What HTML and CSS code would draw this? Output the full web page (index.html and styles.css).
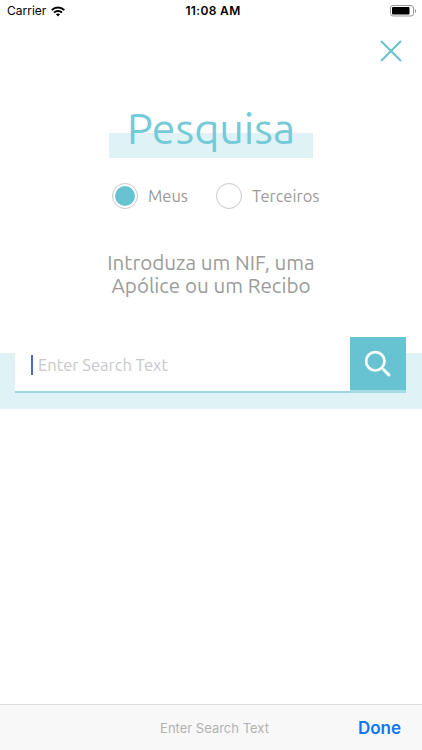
FILE: index.html
```html
<!DOCTYPE html>
<html lang="pt">

<head>
    <meta charset="UTF-8" />
    <meta name="viewport" content="width=device-width, initial-scale=1.0" />
    <title>Pesquisa</title>
    <link rel="stylesheet" href="styles.css">
</head>

<body>
    <header class="status">
        <div class="carrier">
            <span>Carrier</span>
            <svg width="14" height="11" viewBox="0 0 14 11" fill="none" stroke="#000" stroke-width="2">
                <path d="M0.7 4.1C4.2 0.6 9.8 0.6 13.3 4.1" />
                <path d="M3 6.6C5.2 4.5 8.8 4.5 11 6.6" />
                <path d="M4.9 8.2C6.1 7.2 7.9 7.2 9.1 8.2L7 10.4Z" fill="#000" stroke="none" />
            </svg>
        </div>
        <span class="time">11:08 AM</span>
        <svg class="battery" width="27" height="12" viewBox="0 0 27 12">
            <rect x="0.5" y="0.5" width="23" height="10.5" rx="2.5" fill="#fff" stroke="#999" />
            <rect x="2" y="2" width="17.5" height="7.5" rx="1" fill="#000" />
            <path d="M25 4v4c1.6-.6 1.6-3.4 0-4z" fill="#999" />
        </svg>
    </header>

    <main>
        <div class="close">
            <svg width="22" height="22" viewBox="0 0 22 22" stroke="#67c1d0" stroke-width="2" stroke-linecap="round">
                <path d="M1.5 1.5L20.5 20.5M20.5 1.5L1.5 20.5" />
            </svg>
        </div>

        <h1>Pesquisa</h1>

        <div class="options">
            <div class="option">
                <span class="radio active"></span>
                <span class="meus">Meus</span>
            </div>
            <div class="option">
                <span class="radio"></span>
                <span class="terceiros">Terceiros</span>
            </div>
        </div>

        <p class="info">Introduza um NIF, uma<br>Apólice ou um Recibo</p>

        <div class="search">
            <div class="field">
                <span class="caret"></span>
                <span class="placeholder">Enter Search Text</span>
            </div>
            <div class="search-btn">
                <svg width="28" height="28" viewBox="0 0 28 28" fill="none" stroke="#fff">
                    <circle cx="11.3" cy="11.3" r="9.2" stroke-width="2.7" />
                    <path d="M19.7 19.7L25 25" stroke-width="3" stroke-linecap="round" />
                </svg>
            </div>
        </div>
    </main>

    <footer class="toolbar">
        <span class="hint">Enter Search Text</span>
        <span class="done">Done</span>
    </footer>
</body>

</html>
```

FILE: styles.css
```css
:root{
    --teal: #67c3d2;
    --title: #75cad7;
    --light: #dff2f6;
    --grey: #9b9b9b;
}

*{
    box-sizing: border-box;
}
body{
    margin: 0;
    height: 750px;
    display: flex;
    flex-direction: column;
    overflow: hidden;
    background-color: #fff;
    font-family: Ubuntu, "Noto Sans", sans-serif;
}
.status{
    display: grid;
    grid-template-columns: 1fr auto 1fr;
    align-items: center;
    height: 22px;
    padding: 0 5px 0 7px;
    font-family: Inter, sans-serif;
    font-size: 12px;
    line-height: 22px;
}
.carrier{
    display: flex;
    align-items: center;
    gap: 5px;
}
.time{
    padding-left: 2px;
    font-weight: 600;
    letter-spacing: 0.35px;
}
.battery{
    justify-self: end;
}
main{
    flex: 1;
}
.close{
    display: flex;
    justify-content: flex-end;
    padding: 18px 20px 0 0;
}
h1{
    width: 204px;
    height: 60px;
    margin: 36px auto 0 109px;
    background: linear-gradient(transparent 35px, var(--light) 35px);
    color: var(--title);
    font-size: 43px;
    font-weight: 400;
    line-height: 60px;
    text-align: center;
    white-space: nowrap;
}
.options{
    display: flex;
    gap: 28px;
    height: 26px;
    margin: 25px 0 0 112px;
    color: var(--grey);
    font-size: 16.5px;
}
.option{
    display: flex;
    align-items: center;
    gap: 10px;
    line-height: 26px;
}
.option .meus{
    width: 40px;
}
.radio{
    width: 26px;
    height: 26px;
    padding: 2px;
    border: 1px solid #c9c9c9;
    border-radius: 50%;
}
.radio.active{
    background: var(--teal) content-box;
}
.info{
    margin: 42px 0 0;
    color: var(--grey);
    font-size: 20.6px;
    line-height: 23px;
    text-align: center;
}
.search{
    display: flex;
    height: 72px;
    margin-top: 40px;
    padding: 0 16px 16px 15px;
    background: linear-gradient(transparent 16px, var(--light) 16px);
}
.field{
    display: flex;
    align-items: center;
    flex: 1;
    gap: 5px;
    padding: 2px 0 0 16px;
    background-color: #fff;
    border-bottom: 2px solid #9bd6e0;
}
.caret{
    width: 2px;
    height: 20px;
    background-color: #4a69c8;
}
.placeholder{
    color: #c7c7cd;
    font-size: 16.5px;
}
.search-btn{
    display: flex;
    justify-content: center;
    align-items: center;
    width: 56px;
    background-color: var(--teal);
    border-bottom: 3px solid #a6dae4;
}
.toolbar{
    display: grid;
    grid-template-columns: 1fr auto 1fr;
    align-items: center;
    height: 46px;
    padding: 0 21px;
    background-color: #f8f8f8;
    border-top: 1px solid #dcdcdc;
    font-family: Inter, sans-serif;
}
.hint{
    grid-column: 2;
    padding-left: 7px;
    color: #b2b2b2;
    font-size: 13px;
}
.done{
    justify-self: end;
    color: #0f78f0;
    font-size: 17px;
    font-weight: 600;
}
```
